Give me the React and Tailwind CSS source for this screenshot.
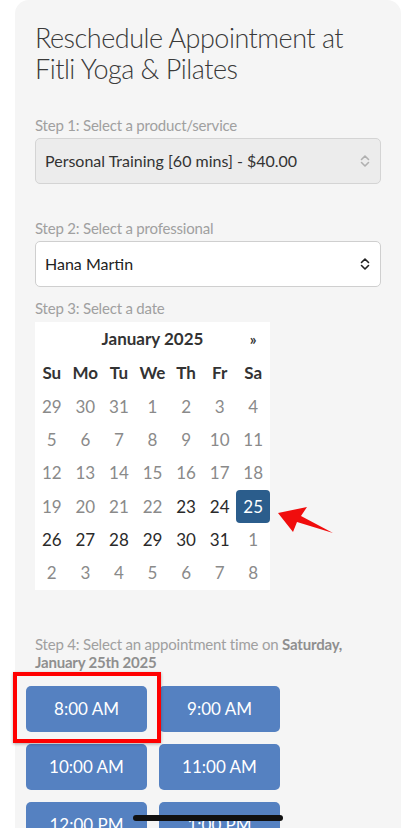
import React from 'react';

const font = { fontFamily: 'Lato, "Open Sans", "Liberation Sans", sans-serif' };

const weeks = [
  [29, 30, 31, 1, 2, 3, 4],
  [5, 6, 7, 8, 9, 10, 11],
  [12, 13, 14, 15, 16, 17, 18],
  [19, 20, 21, 22, 23, 24, 25],
  [26, 27, 28, 29, 30, 31, 1],
  [2, 3, 4, 5, 6, 7, 8],
];

// which cells are bookable (dark text)
const isOpen = (w, d) => (w === 3 && d >= 4) || (w === 4 && d <= 5);

const times = ['8:00 AM', '9:00 AM', '10:00 AM', '11:00 AM', '12:00 PM', '1:00 PM'];

const Chevrons = ({ color }) => (
  <svg width="10" height="14" viewBox="0 0 10 14" fill="none" stroke={color} strokeWidth="1.6" strokeLinecap="round" strokeLinejoin="round">
    <path d="M1.5 5.5 L5 2 L8.5 5.5" />
    <path d="M1.5 8.5 L5 12 L8.5 8.5" />
  </svg>
);

const Calendar = () => (
  <div className="relative mt-[4px] w-[235px] bg-white">
    <div className="grid grid-cols-7 h-[34px] items-center text-[17px] font-bold text-[#333]">
      <span />
      <span className="col-span-5 text-center">January 2025</span>
      <span className="text-center text-[15px]">»</span>
    </div>
    <div className="grid grid-cols-7 h-[34px] items-center text-[17px] font-bold text-[#333]">
      {['Su', 'Mo', 'Tu', 'We', 'Th', 'Fr', 'Sa'].map((d) => (
        <span key={d} className="text-center">{d}</span>
      ))}
    </div>
    {weeks.map((week, w) => (
      <div key={w} className="grid grid-cols-7 h-[33.3px] items-center text-[17px]">
        {week.map((n, d) =>
          w === 3 && d === 6 ? (
            <span key={d} className="flex h-[33px] items-center justify-center rounded-[4px] bg-[#2b5d8c] text-white">
              {n}
            </span>
          ) : (
            <span key={d} className={'text-center ' + (isOpen(w, d) ? 'text-[#2a2a2a]' : 'text-[#8a8a8a]')}>
              {n}
            </span>
          )
        )}
      </div>
    ))}
    {/* red annotation arrow */}
    <svg className="absolute left-[240px] top-[184px]" width="70" height="40" viewBox="0 0 70 40">
      <polygon points="3,7 32,1 26,10 58,27 22,16 18,26" fill="#f00d0d" />
    </svg>
  </div>
);

export default function App() {
  return (
    <div className="relative h-[828px] overflow-hidden bg-white" style={font}>
      <div className="ml-[15px] w-[386px] min-h-[828px] rounded-t-[14px] bg-[#f5f5f5] px-[20px]">
        <h1 className="pt-[22px] text-[27px] leading-[31px] tracking-[-0.5px] font-light text-[#3a3a3a]">
          Reschedule Appointment at Fitli Yoga &amp; Pilates
        </h1>

        <p className="mt-[31px] text-[15px] leading-[20px] tracking-[-0.2px] text-[#a0a0a0]">Step 1: Select a product/service</p>
        <div className="mt-[3px] flex h-[46px] items-center justify-between rounded-[5px] border border-[#d4d4d4] bg-[#ececec] pl-[9px] pr-[10px] text-[16px] text-[#333]">
          <span>Personal Training [60 mins] - $40.00</span>
          <Chevrons color="#b0b0b0" />
        </div>

        <p className="mt-[34px] text-[15px] leading-[20px] tracking-[-0.2px] text-[#a0a0a0]">Step 2: Select a professional</p>
        <div className="mt-[3px] flex h-[46px] items-center justify-between rounded-[5px] border border-[#cfcfcf] bg-white pl-[9px] pr-[10px] text-[16px] text-[#222]">
          <span>Hana Martin</span>
          <Chevrons color="#222" />
        </div>

        <p className="mt-[11px] text-[15px] leading-[20px] tracking-[-0.2px] text-[#a0a0a0]">Step 3: Select a date</p>
        <Calendar />

        <p className="mt-[45px] text-[15px] leading-[18px] tracking-[-0.2px] text-[#a0a0a0]">
          Step 4: Select an appointment time on <span className="font-bold text-[#8f8f8f]">Saturday,</span>
          <br />
          <span className="font-bold text-[#8f8f8f]">January 25th 2025</span>
        </p>

        <div className="relative mt-[15px] ml-[-9px] grid w-[254px] grid-cols-2 gap-[12px]">
          {times.map((t) => (
            <button key={t} className="flex h-[46px] items-center justify-center rounded-[5px] bg-[#5581c1] text-[17px] text-white">
              {t}
            </button>
          ))}
          <div className="absolute left-[-13px] top-[-14px] h-[71px] w-[148px] border-[4px] border-[#ff0000] shadow-[0_1px_3px_rgba(0,0,0,0.3)]" />
        </div>
      </div>

      {/* home indicator */}
      <div className="absolute bottom-[7px] left-[133px] h-[6px] w-[150px] rounded-full bg-[#111]" />
    </div>
  );
}
